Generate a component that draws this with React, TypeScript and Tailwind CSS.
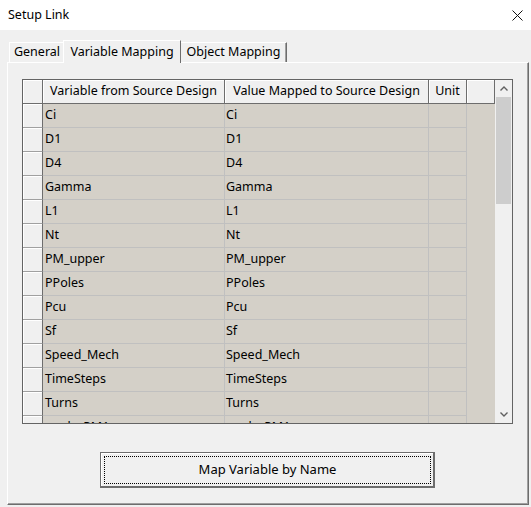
import React from "react";

const rows = [
    "Ci", "D1", "D4", "Gamma", "L1", "Nt", "PM_upper", "PPoles",
    "Pcu", "Sf", "Speed_Mech", "TimeSteps", "Turns", "angle_PM1",
];

const Chevron = ({ up }: { up?: boolean }) => (
    <svg width="8" height="5" viewBox="0 0 8 5" className={up ? "" : "rotate-180"}>
        <path d="M0.5 4.5 L4 1 L7.5 4.5" fill="none" stroke="#606060" strokeWidth="1.4" />
    </svg>
);

const HeaderCell = ({ w, children }: { w: string; children?: React.ReactNode }) => (
    <div className={`${w} h-[24px] shrink-0 flex items-center justify-center bg-[#f0f0f0] border-r border-b border-[#6d6d6d] shadow-[inset_1px_1px_0_#ffffff] whitespace-nowrap`}>
        {children}
    </div>
);

export default function App() {
    return (
        <div className="w-[531px] h-[507px] bg-[#f0f0f0] text-[12.5px] text-black overflow-hidden" style={{ fontFamily: '"Noto Sans", "Noto Sans CJK SC", sans-serif' }}>
            {/* title bar */}
            <div className="h-[30px] bg-white flex items-center justify-between pl-[8px] pr-[8px]">
                <span className="text-[12.5px]">Setup Link</span>
                <svg width="11" height="11" viewBox="0 0 11 11">
                    <path d="M0.5 0.5 L10.5 10.5 M10.5 0.5 L0.5 10.5" stroke="#111" strokeWidth="1" />
                </svg>
            </div>

            <div className="pt-[10px] pl-[7px] pr-[2px]">
                {/* tabs */}
                <div className="relative z-10 flex items-end h-[23px] -mb-[1px] pl-[2px]">
                    <div className="w-[55px] h-[20px] mb-[1px] flex items-center justify-center border-l border-t border-white bg-[#f0f0f0]">
                        General
                    </div>
                    <div className="w-[118px] h-[23px] -ml-[1px] flex items-start pt-[2px] justify-center border-l border-t border-white border-r border-r-[#6d6d6d] bg-[#f0f0f0]">
                        Variable Mapping
                    </div>
                    <div className="w-[106px] h-[20px] mb-[1px] flex items-center justify-center border-t border-white border-r border-r-[#6d6d6d] bg-[#f0f0f0] shadow-[inset_-1px_0_0_#a0a0a0]">
                        Object Mapping
                    </div>
                </div>

                {/* panel */}
                <div className="h-[443px] border-l border-t border-white border-r border-b border-r-[#6d6d6d] border-b-[#6d6d6d] shadow-[inset_-1px_-1px_0_#a0a0a0] pt-[16px] pl-[14px]">
                    {/* grid */}
                    <div className="w-[491px] h-[345px] border border-[#646464] flex overflow-hidden">
                        <div className="w-[472px] flex flex-col bg-[#d4d0c8]">
                            <div className="flex">
                                <HeaderCell w="w-[20px]" />
                                <HeaderCell w="w-[182px]">Variable from Source Design</HeaderCell>
                                <HeaderCell w="w-[204px]">Value Mapped to Source Design</HeaderCell>
                                <HeaderCell w="w-[38px]">Unit</HeaderCell>
                                <HeaderCell w="w-[28px]" />
                            </div>
                            {rows.map(name => (
                                <div key={name} className="flex h-[24px] shrink-0">
                                    <div className="w-[20px] shrink-0 bg-[#f0f0f0] border-r border-b border-r-[#6d6d6d] border-b-[#a0a0a0] shadow-[inset_1px_1px_0_#ffffff]" />
                                    <div className="w-[182px] shrink-0 flex items-center pl-[2px] border-r border-b border-[#c0c0c0]">{name}</div>
                                    <div className="w-[204px] shrink-0 flex items-center pl-[1px] border-r border-b border-[#c0c0c0]">{name}</div>
                                    <div className="w-[38px] shrink-0 border-r border-b border-[#c0c0c0]" />
                                </div>
                            ))}
                        </div>
                        {/* scrollbar */}
                        <div className="w-[17px] flex flex-col bg-[#f0f0f0]">
                            <div className="h-[17px] flex items-center justify-center"><Chevron up /></div>
                            <div className="h-[107px] mx-[1px] bg-[#cdcdcd]" />
                            <div className="flex-1" />
                            <div className="h-[17px] flex items-center justify-center"><Chevron /></div>
                        </div>
                    </div>

                    {/* button */}
                    <div className="pt-[28px] pl-[78px]">
                        <button className="w-[335px] h-[36px] bg-[#f0f0f0] border border-[#6d6d6d] shadow-[inset_-1px_-1px_0_#6d6d6d,inset_1px_1px_0_#ffffff] p-[3px] text-[13px]">
                            <div className="w-full h-full flex items-center justify-center border border-dotted border-black">
                                Map Variable by Name
                            </div>
                        </button>
                    </div>
                </div>
            </div>
        </div>
    );
}
